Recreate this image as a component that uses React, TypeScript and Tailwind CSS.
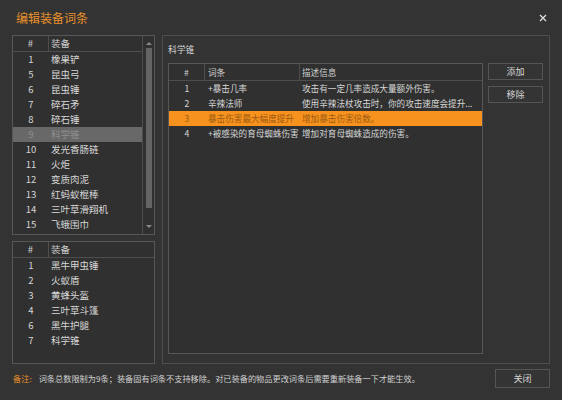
const font = {
  fontFamily: '"Noto Sans CJK SC", "Noto Sans", sans-serif',
};

const equipList = [
  ["1", "橡果铲"],
  ["5", "昆虫弓"],
  ["6", "昆虫锤"],
  ["7", "碎石矛"],
  ["8", "碎石锤"],
  ["9", "科学锥"],
  ["10", "发光香肠链"],
  ["11", "火炬"],
  ["12", "变质肉泥"],
  ["13", "红蚂蚁棍棒"],
  ["14", "三叶草滑翔机"],
  ["15", "飞蛾围巾"],
];

const equipped = [
  ["1", "黑牛甲虫锤"],
  ["2", "火蚁盾"],
  ["3", "黄蜂头盔"],
  ["4", "三叶草斗篷"],
  ["6", "黑牛护腿"],
  ["7", "科学锥"],
];

const affixes = [
  ["1", "+暴击几率", "攻击有一定几率造成大量额外伤害。"],
  ["2", "辛辣法师", "使用辛辣法杖攻击时，你的攻击速度会提升..."],
  ["3", "暴击伤害最大幅度提升", "增加暴击伤害倍数。"],
  ["4", "+被感染的育母蜘蛛伤害", "增加对育母蜘蛛造成的伤害。"],
];

function ListHeader() {
  return (
    <div className="flex h-[16px] shrink-0 border-b border-[#4e4e4e] text-[#cfcfcf]">
      <div className="flex w-[36px] items-center justify-center border-r border-[#4e4e4e]">#</div>
      <div className="flex items-center pl-[2px]">装备</div>
    </div>
  );
}

function EquipRow({ no, name, selected }: { no: string; name: string; selected?: boolean }) {
  return (
    <div
      className={
        "flex h-[15px] shrink-0 items-center leading-[15px] " +
        (selected ? "bg-[#686868] text-[#8e8e8e]" : "text-[#d6d6d6]")
      }
    >
      <div className="w-[36px] text-center">{no}</div>
      <div className="pl-[2px]">{name}</div>
    </div>
  );
}

function Arrow({ up }: { up?: boolean }) {
  return (
    <svg width="6" height="4" viewBox="0 0 6 4" className="mx-auto">
      <path d={up ? "M0 4 L3 1 L6 4 Z" : "M0 0 L3 3 L6 0 Z"} fill="#8a8a8a" />
    </svg>
  );
}

export default function App() {
  return (
    <div className="flex h-[400px] w-[562px] flex-col bg-[#333333] text-[9.5px] leading-none" style={font}>
      {/* Title */}
      <div className="flex h-[35px] shrink-0 items-center justify-between pl-[16px] pr-[15px]">
        <span className="text-[12px] text-[#e8902c]">编辑装备词条</span>
        <svg width="8" height="8" viewBox="0 0 8 8">
          <path d="M1 1 L7 7 M7 1 L1 7" stroke="#dcdcdc" strokeWidth="1.4" />
        </svg>
      </div>

      {/* Body */}
      <div className="flex h-[329px] shrink-0 gap-[7px] px-[12px]">
        {/* Left column */}
        <div className="flex w-[143px] flex-col gap-[6px]">
          <div className="flex h-[200px] border border-[#575757] bg-[#303030]">
            <div className="flex flex-1 flex-col overflow-hidden">
              <ListHeader />
              {equipList.map(([no, name]) => (
                <EquipRow key={no} no={no} name={name} selected={no === "9"} />
              ))}
            </div>
            <div className="flex w-[12px] flex-col border-l border-[#4e4e4e] py-[5px]">
              <Arrow up />
              <div className="mx-auto mt-[3px] h-[160px] w-[6px] bg-[#646464]" />
              <div className="flex-1" />
              <Arrow />
            </div>
          </div>
          <div className="flex flex-1 flex-col border border-[#575757] bg-[#303030]">
            <ListHeader />
            {equipped.map(([no, name]) => (
              <EquipRow key={no} no={no} name={name} />
            ))}
          </div>
        </div>

        {/* Right group */}
        <div className="flex w-[388px] border border-[#4e4e4e] px-[5px]">
          <div className="flex w-[315px] flex-col">
            <div className="flex h-[27px] items-center pt-[2px] text-[8.8px] text-[#d6d6d6]">科学锥</div>
            <div className="flex h-[291px] flex-col border border-[#575757] bg-[#303030] text-[8.6px]">
              <div className="flex h-[17px] shrink-0 border-b border-[#4e4e4e] text-[#cfcfcf]">
                <div className="flex w-[36px] items-center justify-center border-r border-[#4e4e4e]">#</div>
                <div className="flex w-[95px] items-center border-r border-[#4e4e4e] pl-[3px]">词条</div>
                <div className="flex items-center pl-[2px]">描述信息</div>
              </div>
              {affixes.map(([no, term, desc]) => {
                const sel = no === "3";
                return (
                  <div
                    key={no}
                    className={
                      "flex h-[15px] shrink-0 items-center whitespace-nowrap leading-[15px] " +
                      (sel ? "bg-[#f7921e] text-[#9c5a12]" : "text-[#d6d6d6]")
                    }
                  >
                    <div className="w-[36px] text-center">{no}</div>
                    <div className="w-[95px] overflow-hidden pl-[3px]">{term}</div>
                    <div className="min-w-0 flex-1 overflow-hidden pl-[2px]">{desc}</div>
                  </div>
                );
              })}
            </div>
          </div>
          <div className="ml-[5px] flex w-[55px] flex-col gap-[6px] pt-[27px] text-[9px]">
            <button className="h-[17px] border border-[#555555] bg-[#343434] text-[#d6d6d6]">添加</button>
            <button className="h-[17px] border border-[#555555] bg-[#343434] text-[#d6d6d6]">移除</button>
          </div>
        </div>
      </div>

      {/* Footer */}
      <div className="flex flex-1 items-start pl-[13px] pr-[12px] pt-[5px] text-[8.2px]">
        <div className="flex h-[19px] flex-1 items-center">
          <span className="text-[#e8902c]">备注:</span>
          <span className="ml-[7px] text-[#d0d0d0]">
            词条总数限制为9条；装备固有词条不支持移除。对已装备的物品更改词条后需要重新装备一下才能生效。
          </span>
        </div>
        <button className="h-[19px] w-[55px] border border-[#555555] bg-[#343434] text-[9px] text-[#d6d6d6]">关闭</button>
      </div>
    </div>
  );
}
